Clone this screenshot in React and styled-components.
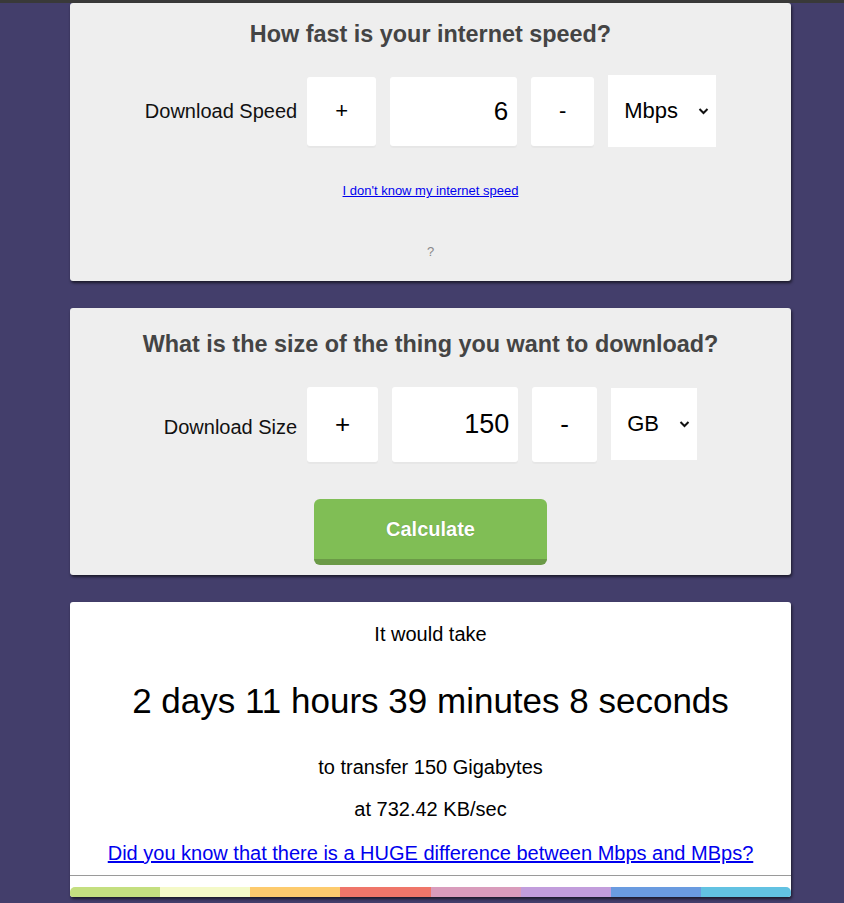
import React from 'react'
import styled, { createGlobalStyle } from 'styled-components'

const GlobalStyle = createGlobalStyle`
  html, body {
    margin: 0;
    padding: 0;
    background: #433e6b;
    font-family: 'Liberation Sans', Arial, sans-serif;
  }
`

const TopStrip = styled.div`
  height: 3px;
  background: #393939;
`

const Page = styled.main`
  display: flex;
  flex-direction: column;
  gap: 27px;
  padding-left: 70px;
  padding-bottom: 6px;
`

const Card = styled.section`
  width: 721px;
  box-sizing: border-box;
  background: ${({ white }) => (white ? '#fff' : '#eeeeee')};
  border-radius: 3px;
  box-shadow: 1px 2px 3px rgba(0, 0, 0, 0.6);
  padding-top: ${({ pt }) => pt}px;
  padding-bottom: ${({ pb }) => pb}px;
  display: flex;
  flex-direction: column;
  align-items: center;
  text-align: center;
  overflow: hidden;
`

const Title = styled.h2`
  margin: 0;
  font-size: 23.4px;
  line-height: 28px;
  font-weight: 700;
  color: #444;
`

const Row = styled.div`
  display: flex;
  align-items: center;
  gap: 14px;
  margin-top: ${({ mt }) => mt}px;
  height: ${({ h }) => h}px;
`

const Label = styled.span`
  font-size: 20px;
  color: #111;
  margin-right: -4px;
  padding-top: ${({ drop }) => drop || 0}px;
`

const Box = styled.div`
  width: ${({ w }) => w}px;
  height: ${({ h }) => h}px;
  background: #fff;
  border-radius: 3px;
  box-shadow: 0 2px 1px rgba(0, 0, 0, 0.03);
  display: flex;
  align-items: center;
  justify-content: ${({ right }) => (right ? 'flex-end' : 'center')};
  padding-right: ${({ right }) => (right ? 9 : 0)}px;
  box-sizing: border-box;
  font-size: ${({ fs }) => fs}px;
  color: #000;
`

const Select = styled.div`
  width: ${({ w }) => w}px;
  height: 72px;
  background: #fff;
  display: flex;
  align-items: center;
  justify-content: space-between;
  padding: 0 7px 0 16px;
  box-sizing: border-box;
  font-size: 22px;
  color: #000;
`

const SmallLink = styled.a`
  margin-top: ${({ mt }) => mt}px;
  font-size: 13px;
  line-height: 16px;
  color: #0000ee;
  text-decoration: underline;
`

const Hint = styled.span`
  margin-top: 45px;
  font-size: 13px;
  line-height: 16px;
  color: #888;
`

const CalcButton = styled.button`
  margin-top: 37px;
  width: 233px;
  height: 66px;
  border: none;
  border-bottom: 6px solid #6b9a47;
  border-radius: 6px;
  background: #80be55;
  color: #fff;
  font-family: inherit;
  font-size: 20px;
  font-weight: 700;
  text-shadow: 0 0 1px rgba(0, 0, 0, 0.3);
  padding: 0;
`

const Line = styled.p`
  margin: ${({ mt }) => mt}px 0 0;
  font-size: ${({ fs }) => fs || 20}px;
  line-height: ${({ lh }) => lh || 24}px;
  color: #000;
`

const BigLink = styled.a`
  margin-top: 20px;
  font-size: 20px;
  line-height: 24px;
  color: #0000ee;
  text-decoration: underline;
`

const Rule = styled.hr`
  align-self: stretch;
  margin: 10px 0 0;
  border: none;
  border-top: 1px solid #9a9a9a;
`

const ColorBar = styled.div`
  align-self: stretch;
  display: flex;
  margin-top: 11px;
  height: 10px;
  border-radius: 5px 5px 0 0;
  overflow: hidden;
`

const Swatch = styled.span`
  flex: 1;
  background: ${({ c }) => c};
`

const Chevron = () => (
  <svg width="11" height="8" viewBox="0 0 11 8">
    <path d="M1.5 2 L5.5 6 L9.5 2" fill="none" stroke="#111" strokeWidth="2" />
  </svg>
)

const colours = ['#c4df80', '#f4f9c8', '#fdcb6e', '#ef766a', '#d99cbc', '#c29ddc', '#6a9be0', '#62c2e2']

function App() {
  return (
    <>
      <GlobalStyle />
      <TopStrip />
      <Page>
        <Card pt={17} pb={21}>
          <Title>How fast is your internet speed?</Title>
          <Row mt={27} h={72}>
            <Label>Download Speed</Label>
            <Box w={69} h={69} fs={22}>+</Box>
            <Box w={127} h={69} fs={26} right>6</Box>
            <Box w={63} h={69} fs={22}>-</Box>
            <Select w={108}>
              Mbps
              <Chevron />
            </Select>
          </Row>
          <SmallLink href="#" mt={36}>I don't know my internet speed</SmallLink>
          <Hint>?</Hint>
        </Card>

        <Card pt={22} pb={10}>
          <Title>What is the size of the thing you want to download?</Title>
          <Row mt={28} h={76}>
            <Label drop={6}>Download Size</Label>
            <Box w={71} h={75} fs={26}>+</Box>
            <Box w={126} h={75} fs={27} right>150</Box>
            <Box w={65} h={75} fs={26}>-</Box>
            <Select w={86}>
              GB
              <Chevron />
            </Select>
          </Row>
          <CalcButton>Calculate</CalcButton>
        </Card>

        <Card white pt={20} pb={0}>
          <Line mt={0}>It would take</Line>
          <Line mt={35} fs={35} lh={40}>2 days 11 hours 39 minutes 8 seconds</Line>
          <Line mt={34}>to transfer 150 Gigabytes</Line>
          <Line mt={18}>at 732.42 KB/sec</Line>
          <BigLink href="#">Did you know that there is a HUGE difference between Mbps and MBps?</BigLink>
          <Rule />
          <ColorBar>
            {colours.map((c) => (
              <Swatch key={c} c={c} />
            ))}
          </ColorBar>
        </Card>
      </Page>
    </>
  )
}

export default App
